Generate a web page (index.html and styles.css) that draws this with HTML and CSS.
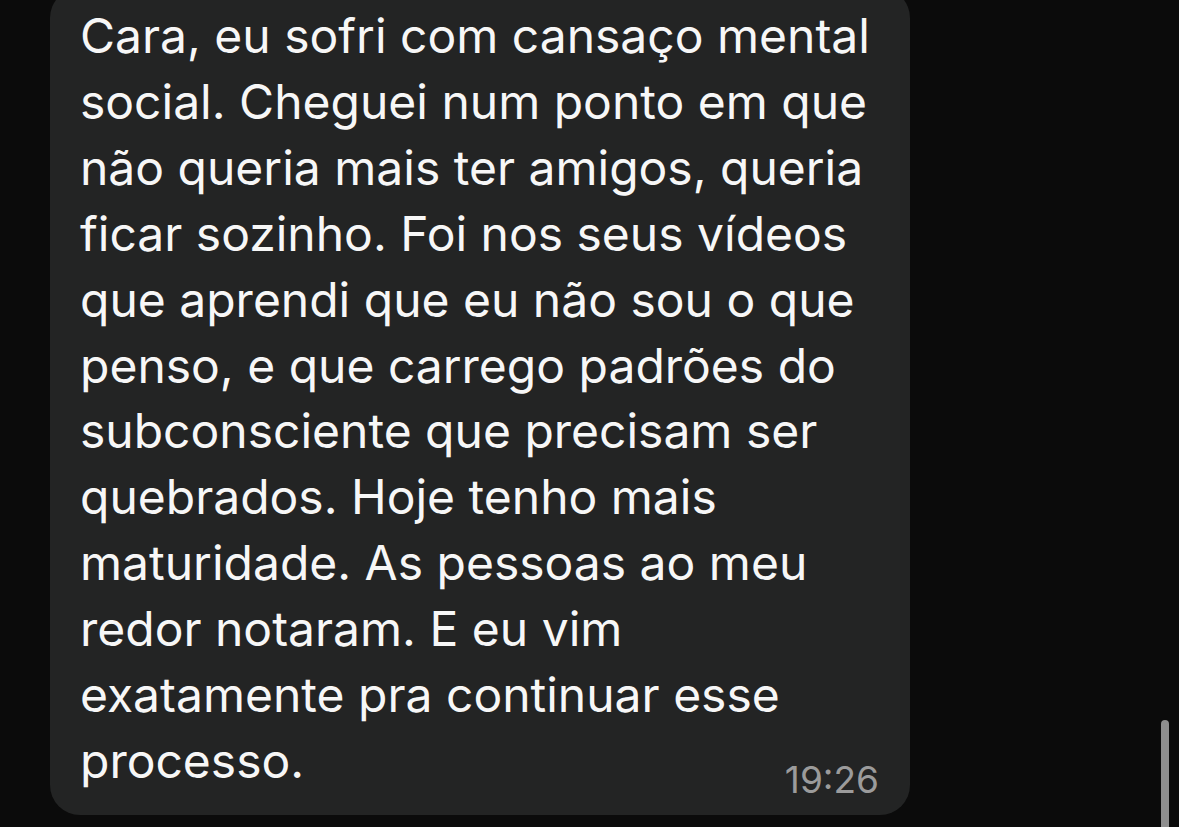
FILE: index.html
```html
<!DOCTYPE html>
<html lang="pt-BR">
<head>
<meta charset="utf-8">
<title>Mensagem</title>
<link rel="stylesheet" href="styles.css">
</head>
<body>
<main class="chat">
  <div class="bubble">
    <p class="text">Cara, eu sofri com cansaço mental<br>social. Cheguei num ponto em que<br>não queria mais ter amigos, queria<br>ficar sozinho. Foi nos seus vídeos<br>que aprendi que eu não sou o que<br>penso, e que carrego padrões do<br>subconsciente que precisam ser<br>quebrados. Hoje tenho mais<br>maturidade. As pessoas ao meu<br>redor notaram. E eu vim<br>exatamente pra continuar esse<br>processo.</p>
    <div class="meta"><span class="time">19:26</span></div>
  </div>
</main>
<div class="scrollbar"></div>
</body>
</html>
```
FILE: styles.css
```css
html, body {
  margin: 0;
  padding: 0;
  height: 100%;
  overflow: hidden;
}
body {
  background: #0b0b0b;
  font-family: Inter, "Noto Sans", sans-serif;
}
.chat {
  display: flex;
  flex-direction: column;
  align-items: flex-start;
  padding-left: 50px;
}
.bubble {
  width: 860px;
  box-sizing: border-box;
  margin-top: -12px;
  padding: 15px 31px 15px 30px;
  background: #232424;
  border-radius: 30px;
}
.text {
  margin: 0;
  color: #f7f7f7;
  font-size: 48px;
  line-height: 65.9px;
  letter-spacing: 0;
}
.meta {
  display: flex;
  justify-content: flex-end;
  margin-top: -34px;
  line-height: 40px;
}
.time {
  color: #9b9b9b;
  font-size: 37px;
}
.scrollbar {
  position: absolute;
  left: 1161px;
  top: 720px;
  width: 8px;
  height: 120px;
  background: #8e8e8e;
  border-radius: 4px;
}
```
